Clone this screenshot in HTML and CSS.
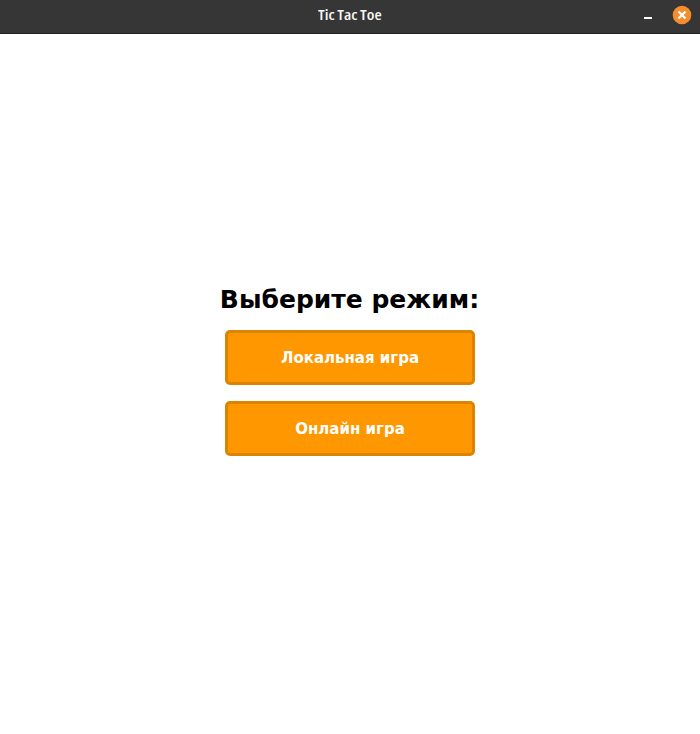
FILE: index.html
```html
<!DOCTYPE html>
<html lang="ru">
<head>
<meta charset="utf-8">
<title>Tic Tac Toe</title>
<link rel="stylesheet" href="styles.css">
</head>
<body>
<header class="titlebar">
  <span class="title">Tic Tac Toe</span>
  <div class="controls">
    <svg class="minimize" width="8" height="20" viewBox="0 0 8 20"><path d="M0 12h8v2H0z" fill="#fff"/></svg>
    <svg class="close" width="20" height="20" viewBox="0 0 20 20"><circle cx="10" cy="10" r="9.3" fill="#f58d2c"/><path d="M6.5 6.5l7 7M13.5 6.5l-7 7" stroke="#fff" stroke-width="2.2"/></svg>
  </div>
</header>
<main class="menu">
  <h1 class="heading">Выберите режим:</h1>
  <button class="mode">Локальная игра</button>
  <button class="mode">Онлайн игра</button>
</main>
</body>
</html>
```

FILE: styles.css
```css
body {
  margin: 0;
  height: 734px;
  display: flex;
  flex-direction: column;
  background: #fff;
  overflow: hidden;
}
.titlebar {
  display: grid;
  grid-template-columns: 1fr auto 1fr;
  height: 34px;
  box-sizing: border-box;
  border-bottom: 1px solid #231f23;
  background: #363636;
}
.title {
  grid-column: 2;
  color: #f6f6f6;
  font: 600 14px/30px "Open Sans", sans-serif;
  font-stretch: 75%;
  word-spacing: -0.3px;
  transform: scaleX(1.185);
}
.controls {
  display: flex;
  justify-content: flex-end;
  gap: 20px;
  padding: 5px 8px 0 0;
}
.menu {
  display: flex;
  flex-direction: column;
  align-items: center;
  padding-top: 251px;
}
.heading {
  margin: 0 0 15px;
  padding-right: 1px;
  color: #000;
  font: bold 25px/30px "DejaVu Sans", sans-serif;
}
.mode {
  width: 250px;
  height: 55px;
  margin: 0 0 16px;
  padding: 0;
  border: 3px solid #dc8300;
  border-radius: 5px;
  background: #ff9800;
  color: #fff;
  font: bold 15px/20px "DejaVu Sans", sans-serif;
}
```
